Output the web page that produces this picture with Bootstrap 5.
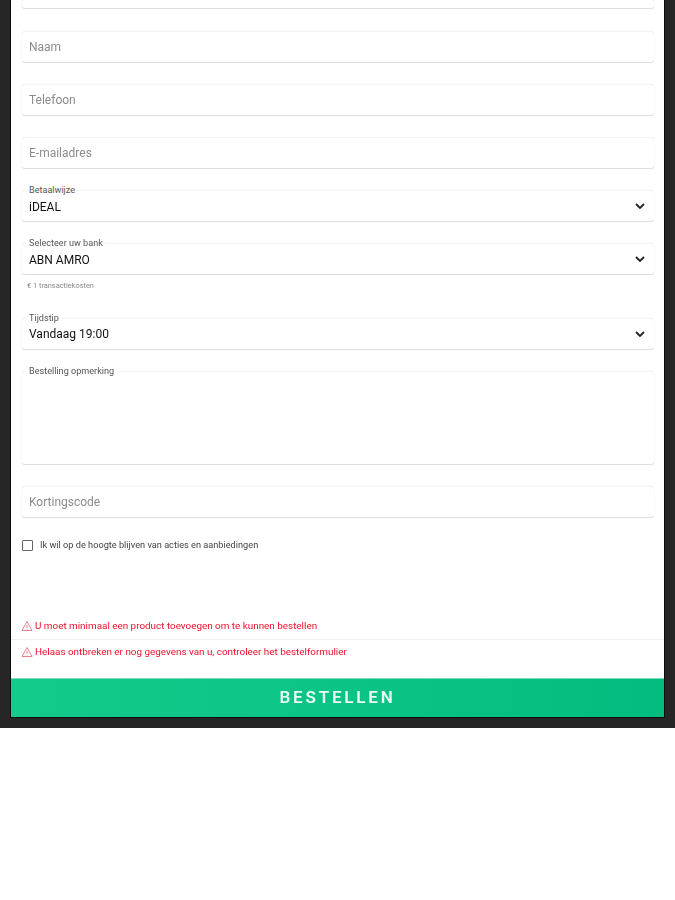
<!DOCTYPE html>
<html lang="nl">
<head>
    <meta charset="UTF-8">
    <meta name="viewport" content="width=device-width, initial-scale=1.0">
    <title>Bestellen</title>
    <link href="https://cdn.jsdelivr.net/npm/bootstrap@5.3.3/dist/css/bootstrap.min.css" rel="stylesheet">
    <style>
        body { background: #fff; font-family: Roboto, "Liberation Sans", sans-serif; }
        .frame { height: 728px; background: #262626; padding: 0 10px; }
        .sheet { height: 718px; background: #fff; border: solid #0c0c0c; border-width: 0 1px 1px; display: flex; flex-direction: column; overflow: hidden; }
        .form-area { padding: 0 10px 0 11px; filter: blur(.55px); }
        .fld { position: relative; height: 31px; margin-bottom: 22px; }
        .fld .form-control, .fld .form-select {
            height: 100%; padding: 0 7px; border: 0; border-top: 1px solid #f5f5f5; border-radius: 3px;
            box-shadow: 0 1px 1px #dcdcdc, 0 0 1px #e6e6e6;
            font-size: 12px; color: #111; background-color: #fff;
        }
        .fld .form-control::placeholder { color: #8c8c8c; opacity: 1; }
        .fld .form-select {
            padding-top: 1px; background-position: right 9px center; background-size: 10px 10px;
            background-image: url("data:image/svg+xml,%3csvg xmlns='http://www.w3.org/2000/svg' viewBox='0 0 10 10'%3e%3cpath fill='none' stroke='%23222' stroke-width='1.8' d='M1 3l4 4 4-4'/%3e%3c/svg%3e");
        }
        .fld-label { position: absolute; left: 5px; top: -5px; padding: 0 2px; background: #fff; font-size: 9.1px; line-height: 11px; color: #555; z-index: 1; }
        .fld-first { height: 9px; margin-top: -1px; margin-bottom: 23px; }
        .fld-hint { height: 75px; margin-bottom: 0; }
        .fld-hint .form-select { height: 31px; }
        .hint-text { display: block; margin: 8px 0 0 5px; font-size: 7.4px; line-height: 8px; color: #888; }
        .fld .fld-time { padding-top: 0; }
        .fld-memo { height: 93px; }
        .fld-memo .form-control { resize: none; }
        .fld-plain { margin-bottom: 22px; }
        .news { height: 12px; font-size: 9.2px; color: #444; gap: 7px; }
        .news .form-check-input { width: 11px; height: 11px; margin: 0; border: 1px solid #666; border-radius: 1px; }
        .news label { line-height: 12px; }
        .problem { display: flex; gap: 2px; padding-left: 10px; font-size: 9.9px; line-height: 12px; color: #ee0f2a; filter: blur(.4px); }
        .problem svg { width: 12px; height: 12px; flex: none; }
        .problem-a { height: 13px; margin-bottom: 7px; align-items: center; }
        .problem-b { height: 39px; align-items: flex-start; border-top: 1px solid #f1f1f1; padding-top: 6px; }
        .order-btn { height: 39px; flex: none; border: 0; border-top: 1px solid #7fdcb9; border-radius: 0; background: linear-gradient(90deg, #13cb8b, #02bd7f); color: #e9fbf4; font-size: 17px; font-weight: 600; letter-spacing: 2.8px; filter: blur(.35px); }
    </style>
</head>
<body>
    <div class="frame">
        <main class="sheet">
            <form class="form-area flex-grow-1">
                <div class="fld fld-first"><input class="form-control" type="text"></div>
                <div class="fld"><input class="form-control" type="text" placeholder="Naam"></div>
                <div class="fld"><input class="form-control" type="text" placeholder="Telefoon"></div>
                <div class="fld"><input class="form-control" type="text" placeholder="E-mailadres"></div>
                <div class="fld">
                    <span class="fld-label">Betaalwijze</span>
                    <select class="form-select"><option>iDEAL</option></select>
                </div>
                <div class="fld fld-hint">
                    <span class="fld-label">Selecteer uw bank</span>
                    <select class="form-select"><option>ABN AMRO</option></select>
                    <small class="hint-text">€ 1 transactiekosten</small>
                </div>
                <div class="fld">
                    <span class="fld-label">Tijdstip</span>
                    <select class="form-select fld-time"><option>Vandaag 19:00</option></select>
                </div>
                <div class="fld fld-memo">
                    <span class="fld-label">Bestelling opmerking</span>
                    <textarea class="form-control"></textarea>
                </div>
                <div class="fld fld-plain"><input class="form-control" type="text" placeholder="Kortingscode"></div>
                <div class="news d-flex align-items-center">
                    <input class="form-check-input" type="checkbox" id="nieuws">
                    <label for="nieuws">Ik wil op de hoogte blijven van acties en aanbiedingen</label>
                </div>
            </form>
            <div>
                <div class="problem problem-a">
                    <svg viewBox="0 0 12 12" fill="none" stroke="#f0808e" stroke-width="1"><path d="M6 1.5 11 10.5H1Z"/><path d="M6 5v3M6 9v.6"/></svg>
                    U moet minimaal een product toevoegen om te kunnen bestellen
                </div>
                <div class="problem problem-b">
                    <svg viewBox="0 0 12 12" fill="none" stroke="#f0808e" stroke-width="1"><path d="M6 1.5 11 10.5H1Z"/><path d="M6 5v3M6 9v.6"/></svg>
                    Helaas ontbreken er nog gegevens van u, controleer het bestelformulier
                </div>
            </div>
            <button type="button" class="btn order-btn w-100">BESTELLEN</button>
        </main>
    </div>
    <script src="https://cdn.jsdelivr.net/npm/bootstrap@5.3.3/dist/js/bootstrap.bundle.min.js"></script>
</body>
</html>
